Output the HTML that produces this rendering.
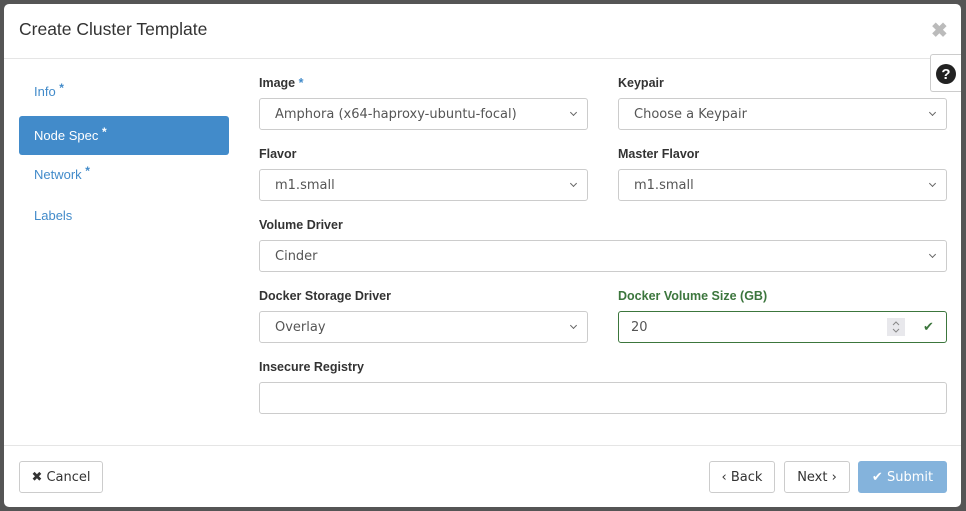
<!DOCTYPE html>
<html><head><style>
body{margin:0;width:966px;height:511px;background:#555;position:relative;overflow:hidden;font-family:"Liberation Sans",sans-serif}
.m{position:absolute;left:4px;top:4px;width:957px;height:503px;background:#fff;border-radius:5px}
.t{position:absolute;left:15px;top:15px;font-size:17.5px;color:#333}
.x{position:absolute;left:927px;top:14px;font-size:20px;color:#bbb;font-weight:bold}
.hr{position:absolute;left:0;width:957px;height:1px;background:#e5e5e5}
.help{position:absolute;left:930px;top:54px;width:31px;height:38px;border:1px solid #ccc;border-right:none;background:#fff;border-radius:3px 0 0 3px;box-sizing:border-box}
.nav{position:absolute;left:15px;width:210px;height:39px;font-size:13px;color:#428bca;line-height:39px;padding-left:15px;box-sizing:border-box;border-radius:3px}
.nav.a{background:#428bca;color:#fff}
.nav sup{font-size:12px;font-weight:bold;vertical-align:top;position:relative;top:-3px}
.l{position:absolute;font-size:12.5px;font-weight:bold;color:#333}
.f{position:absolute;height:32px;border:1px solid #ccc;border-radius:3px;box-sizing:border-box;font-family:"DejaVu Sans",sans-serif;font-size:13px;color:#555;line-height:31px;padding-left:15px}
.f.s::after{content:"";position:absolute;right:11px;top:11px;width:4px;height:4px;border-right:1px solid #666;border-bottom:1px solid #666;transform:rotate(45deg)}
.b{position:absolute;top:457px;height:32px;border:1px solid #ccc;border-radius:3px;box-sizing:border-box;font-family:"DejaVu Sans",sans-serif;font-size:13px;color:#333;line-height:31px;text-align:center;background:#fff}
</style></head><body>
<div class="m">
<div class="t">Create Cluster Template</div>
<div class="x">✖</div>
<div class="hr" style="top:54px"></div>
<div class="hr" style="top:441px"></div>
<div class="nav" style="top:68px">Info <sup>*</sup></div>
<div class="nav a" style="top:112px">Node Spec <sup>*</sup></div>
<div class="nav" style="top:151px">Network <sup>*</sup></div>
<div class="nav" style="top:192px">Labels</div>

<div class="l" style="left:255px;top:72px">Image <span style="color:#428bca">*</span></div>
<div class="f s" style="left:255px;top:94px;width:329px">Amphora (x64-haproxy-ubuntu-focal)</div>
<div class="l" style="left:614px;top:72px">Keypair</div>
<div class="f s" style="left:614px;top:94px;width:329px">Choose a Keypair</div>
<div class="l" style="left:255px;top:143px">Flavor</div>
<div class="f s" style="left:255px;top:165px;width:329px">m1.small</div>
<div class="l" style="left:614px;top:143px">Master Flavor</div>
<div class="f s" style="left:614px;top:165px;width:329px">m1.small</div>
<div class="l" style="left:255px;top:214px">Volume Driver</div>
<div class="f s" style="left:255px;top:236px;width:688px">Cinder</div>
<div class="l" style="left:255px;top:285px">Docker Storage Driver</div>
<div class="f s" style="left:255px;top:307px;width:329px">Overlay</div>
<div class="l" style="left:614px;top:285px;color:#3c763d">Docker Volume Size (GB)</div>
<div class="f" style="left:614px;top:307px;width:329px;border-color:#3c763d;padding-left:12px">20
 <svg width="18" height="18" viewBox="0 0 18 18" style="position:absolute;left:268px;top:6px;background:#e8e8ec"><path d="M6 7l3-3 3 3M6 11l3 3 3-3" fill="none" stroke="#888" stroke-width="1"/></svg>
 <div style="position:absolute;left:304px;top:0;color:#3c763d;font-size:13px">✔</div>
</div>
<div class="l" style="left:255px;top:356px">Insecure Registry</div>
<div class="f" style="left:255px;top:378px;width:688px"></div>

<div class="b" style="left:15px;width:84px">✖ Cancel</div>
<div class="b" style="left:705px;width:66px">‹ Back</div>
<div class="b" style="left:780px;width:66px">Next ›</div>
<div class="b" style="left:854px;width:89px;background:#84b3dc;border-color:#84b3dc;color:#fff">✔ Submit</div>
</div>
<div class="help"><svg width="22" height="22" viewBox="0 0 22 22" style="position:absolute;left:4px;top:8px"><circle cx="11" cy="11" r="10" fill="#222"/><text x="11" y="16" text-anchor="middle" font-family="Liberation Sans" font-weight="bold" font-size="15" fill="#fff">?</text></svg></div>
</body></html>
